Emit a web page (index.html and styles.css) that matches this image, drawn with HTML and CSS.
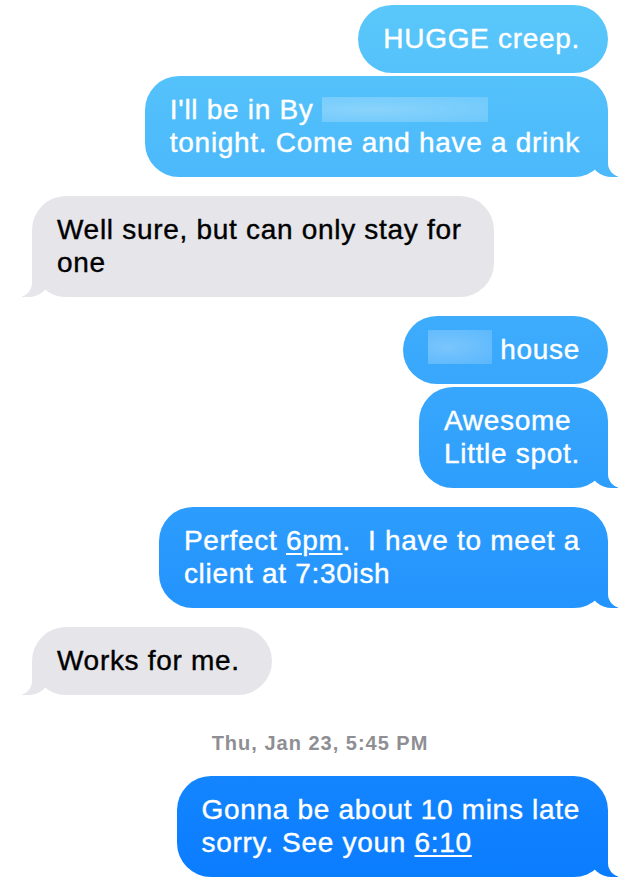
FILE: index.html
```html
<!DOCTYPE html>
<html lang="en">
<head>
    <meta charset="UTF-8">
    <meta name="viewport" content="width=device-width, initial-scale=1.0">
    <title>Messages</title>
    <link rel="stylesheet" href="styles.css">
</head>
<body>
    <div class="thread">
        <div class="group sent">
            <div class="bubble">HUGGE creep.</div>
            <div class="bubble tail">I'll be in By <span class="redact redact-long"></span><br>tonight. Come and have a drink</div>
        </div>

        <div class="group received">
            <div class="bubble tail">Well sure, but can only stay for<br>one</div>
        </div>

        <div class="group sent">
            <div class="bubble"><span class="redact redact-short"></span> house</div>
            <div class="bubble tail">Awesome<br>Little spot.</div>
        </div>

        <div class="group sent">
            <div class="bubble tail">Perfect <u>6pm</u>.&nbsp; I have to meet a<br>client at 7:30ish</div>
        </div>

        <div class="group received">
            <div class="bubble tail">Works for me.</div>
        </div>

        <div class="timestamp">Thu, Jan 23, 5:45 PM</div>

        <div class="group sent">
            <div class="bubble tail">Gonna be about 10 mins late<br>sorry. See youn <u>6:10</u></div>
        </div>
    </div>
</body>
</html>
```

FILE: styles.css
```css
* {
    margin: 0;
    padding: 0;
    box-sizing: border-box;
}

html, body {
    background-color: #fff;
    overflow: hidden;
}

body {
    font-family: 'Liberation Sans', Arial, sans-serif;
    height: 880px;
}

.thread {
    display: flex;
    flex-direction: column;
    gap: 19px;
    padding: 5px 32px;
}

.group {
    display: flex;
    flex-direction: column;
    gap: 3px;
}

.sent {
    align-items: flex-end;
}

.received {
    align-items: flex-start;
}

.bubble {
    position: relative;
    font-size: 28px;
    line-height: 33px;
    letter-spacing: 0.7px;
    -webkit-text-stroke: 0.4px currentColor;
    padding: 17px 28px 18px 25px;
    border-radius: 34px;
}

/* the blue fades down the whole screen, like iOS 7 */
.sent .bubble,
.sent .tail::before {
    background: linear-gradient(#5bc8fa, #0a7cff) fixed;
}

.sent .bubble {
    color: #fff;
}

.received .bubble,
.received .tail::before {
    background: #e5e5ea;
}

.received .bubble {
    color: #000;
    padding: 17px 32px 18px 25px;
}

.bubble u {
    text-decoration-thickness: 2px;
    text-underline-offset: 3px;
}

/* tail */
.tail::before,
.tail::after {
    content: "";
    position: absolute;
    bottom: 0;
    height: 34px;
}

.sent .tail::before {
    right: -10px;
    width: 28px;
    border-bottom-left-radius: 22px 20px;
}

.sent .tail::after {
    right: -36px;
    width: 36px;
    background: #fff;
    border-bottom-left-radius: 14px;
}

.received .tail::before {
    left: -10px;
    width: 28px;
    border-bottom-right-radius: 22px 20px;
}

.received .tail::after {
    left: -36px;
    width: 36px;
    background: #fff;
    border-bottom-right-radius: 14px;
}

.redact {
    display: inline-block;
    background: radial-gradient(ellipse at 30% 50%, rgba(255, 255, 255, 0.32), rgba(255, 255, 255, 0.16));
}

.redact-long {
    width: 166px;
    height: 25px;
    vertical-align: -3px;
}

/* taller than the line, so negative margins keep the bubble height */
.redact-short {
    width: 64px;
    height: 34px;
    margin: -5px 0;
    vertical-align: 0;
}

.timestamp {
    text-align: center;
    color: #8e8e93;
    font-size: 20px;
    font-weight: bold;
    line-height: 22px;
    letter-spacing: 1px;
    margin: 18px 0 3px;
}
```
